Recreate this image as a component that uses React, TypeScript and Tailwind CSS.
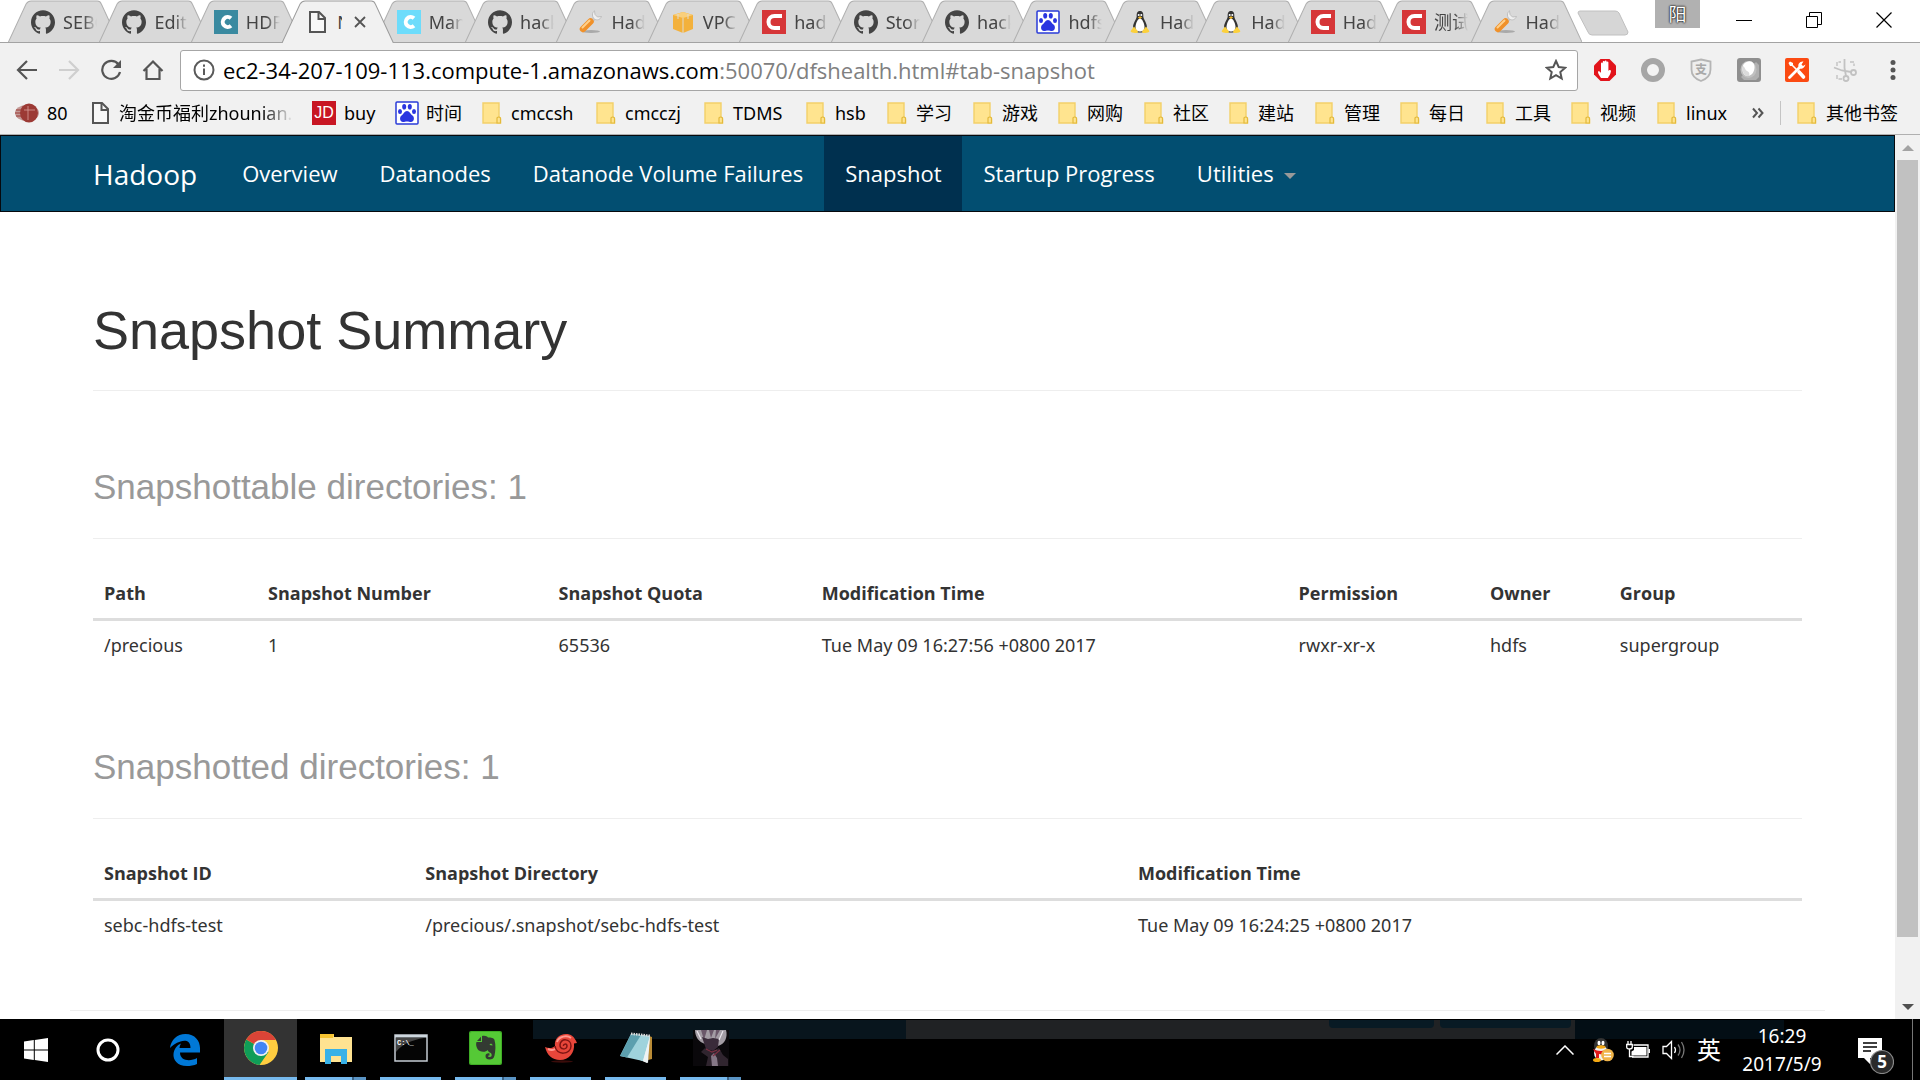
import React from "react";
import { SiGithub } from "react-icons/si";

type Kind = "github" | "cteal" | "page" | "ccyan" | "tool" | "box" | "cred" | "baidu" | "tux";

const tabs: { kind: Kind; title: string }[] = [
  { kind: "github", title: "SEBC" },
  { kind: "github", title: "Edit" },
  { kind: "cteal", title: "HDFS" },
  { kind: "page", title: "Namenode" },
  { kind: "ccyan", title: "Man" },
  { kind: "github", title: "hack" },
  { kind: "tool", title: "Had" },
  { kind: "box", title: "VPC" },
  { kind: "cred", title: "had" },
  { kind: "github", title: "Stor" },
  { kind: "github", title: "hack" },
  { kind: "baidu", title: "hdfs" },
  { kind: "tux", title: "Had" },
  { kind: "tux", title: "Had" },
  { kind: "cred", title: "Had" },
  { kind: "cred", title: "测试" },
  { kind: "tool", title: "Had" },
];

function PageIcon() {
  return (
    <svg viewBox="0 0 24 24" className="h-6 w-6 shrink-0" fill="#f8f8f8" stroke="#555" strokeWidth="2">
      <path d="M5 2h9l6 6v14H5z" />
      <path d="M13.500 2v7H20" fill="none" />
    </svg>
  );
}

function BaiduIcon() {
  return (
    <svg viewBox="0 0 24 24" className="h-6 w-6 shrink-0">
      <rect x="1" y="1" width="22" height="22" rx="1" fill="#fff" stroke="#2a3bd8" strokeWidth="1.500" />
      <g fill="#2a35e0">
        <ellipse cx="5" cy="10.500" rx="2" ry="2.600" />
        <ellipse cx="9.200" cy="5.800" rx="2" ry="2.800" />
        <ellipse cx="14.800" cy="5.800" rx="2" ry="2.800" />
        <ellipse cx="19" cy="10.500" rx="2" ry="2.600" />
        <path d="M12 10c2.500 0 3.500 3 5.500 4.500 2.500 2 1.500 6.500-1.500 6.500-1.500 0-2.500-.5-4-.5s-2.500.5-4 .5c-3 0-4-4.500-1.500-6.500C8.500 13 9.500 10 12 10z" />
      </g>
    </svg>
  );
}

function CIcon({ bg }: { bg: string }) {
  return (
    <svg viewBox="0 0 24 24" className="h-6 w-6 shrink-0">
      <rect width="24" height="24" fill={bg} />
      <path d="M20 6h-7.500a6 6 0 0 0 0 12H18" fill="none" stroke="#fff" strokeWidth="4" />
    </svg>
  );
}

function RoundC({ bg }: { bg: string }) {
  return (
    <svg viewBox="0 0 24 24" className="h-6 w-6 shrink-0">
      <rect width="24" height="24" fill={bg} />
      <path d="M17 8.200a5 5 0 1 0 0 7.600" fill="none" stroke="#fff" strokeWidth="4" />
    </svg>
  );
}

function Favicon({ kind }: { kind: Kind }) {
  switch (kind) {
    case "github":
      return <SiGithub className="h-6 w-6 shrink-0 text-[#444]" />;
    case "cteal":
      return <RoundC bg="#3a8aa0" />;
    case "ccyan":
      return <RoundC bg="#6ddcfb" />;
    case "cred":
      return <CIcon bg="#d63638" />;
    case "page":
      return <PageIcon />;
    case "baidu":
      return <BaiduIcon />;
    case "tool":
      return (
        <svg viewBox="0 0 24 24" className="h-6 w-6 shrink-0">
          <ellipse cx="12" cy="21.500" rx="9" ry="1.500" fill="#888" opacity=".6" />
          <path d="M10 14l7-7" stroke="#c8c8c8" strokeWidth="3.500" />
          <path d="M15.500.8c-3 2-2.500 6.500 0 8.200s5.500 1 7-2.500l-4 .5-2.500-2.500z" fill="#efefef" stroke="#b5b5b5" strokeWidth=".8" />
          <path d="M4 19l7.500-7.500" stroke="#f0912a" strokeWidth="6.500" strokeLinecap="round" />
          <path d="M3.500 17.500l7-7" stroke="#ffd08a" strokeWidth="2" strokeLinecap="round" />
        </svg>
      );
    case "box":
      return (
        <svg viewBox="0 0 24 24" className="h-6 w-6 shrink-0">
          <path d="M2 5l10-3 10 3v14l-10 4-10-4z" fill="#f3b13c" />
          <path d="M2 5l10 3 10-3-10-3z" fill="#f9cf7c" />
          <path d="M12 8v15M7 4v5M17 4v5" stroke="#dfdbd2" strokeWidth="1" />
        </svg>
      );
    case "tux":
      return (
        <svg viewBox="0 0 24 24" className="h-6 w-6 shrink-0">
          <path d="M12 1c-3 0-3.500 2.500-3.300 5.500C8.500 9 5 13 5 17.500c0 3 3 5 7 5s7-2 7-5c0-4.500-3.500-8.500-3.700-11C15.500 3.500 15 1 12 1z" fill="#333" />
          <path d="M12 8.500c-2 0-4.500 5-4.500 8.500s2 4.500 4.500 4.500 4.500-1 4.500-4.500-2.500-8.500-4.500-8.500z" fill="#fff" />
          <circle cx="10.700" cy="5" r="1" fill="#fff" />
          <circle cx="13.300" cy="5" r="1" fill="#fff" />
          <path d="M9.800 7.500l2.200-1.200 2.200 1.200-2.200 1.500z" fill="#f5b921" />
          <path d="M6 16.500l4 5c0 2-2.500 1.500-4.500 1.200S2 22 3 20.500zM18 16.500l-4 5c0 2 2.500 1.500 4.500 1.200S22 22 21 20.500z" fill="#fcd13c" />
        </svg>
      );
  }
}

function Tab({ kind, title, active }: { kind: Kind; title: string; active: boolean }) {
  return (
    <li className={active ? "relative z-10 h-[43px] min-w-0 flex-1" : "relative h-[43px] min-w-0 flex-1"}>
      <svg viewBox="0 0 111 43" preserveAspectRatio="none" className="absolute inset-y-0 left-0 h-full w-[calc(100%+20px)]">
        <path
          d="M0 43L18 4Q20 1 23 1H89Q92 1 93 4L111 43"
          fill={active ? "#f1f1f1" : "#d9d9d9"}
          stroke={active ? "#9c9c9c" : "#b0b0b0"}
        />
        {!active && <path d="M0 42.500H111" stroke="#a3a3a3" />}
      </svg>
      <button className="relative flex h-full w-full items-center gap-2 overflow-hidden pl-[23px] text-left text-lg text-[#444]">
        <Favicon kind={kind} />
        {active ? (
          <>
            <span className="w-[5px] overflow-hidden text-clip">{title}</span>
            <svg viewBox="0 0 12 12" className="ml-1 h-3 w-3 shrink-0" stroke="#555" strokeWidth="1.800">
              <path d="M1 1l10 10M11 1L1 11" />
            </svg>
          </>
        ) : (
          <span className="w-[34px] overflow-hidden whitespace-nowrap [mask-image:linear-gradient(to_right,#000_60%,transparent)]">
            {title}
          </span>
        )}
      </button>
    </li>
  );
}

function TabStrip() {
  return (
    <div className="flex h-[43px] items-start bg-white shadow-[inset_0_-1px_0_#a3a3a3]">
      <ul className="ml-2 flex w-[1554px] min-w-0">
        {tabs.map((t, i) => (
          <Tab key={i} kind={t.kind} title={t.title} active={i === 3} />
        ))}
      </ul>
      <button aria-label="New tab" className="ml-[15px] mt-2.5">
        <svg viewBox="0 0 52 26" className="h-[26px] w-[52px]">
          <path d="M3 1H38Q41 1 42 3L51 22Q51 25 48 25H15Q12 25 11 22L1 3Q1 1 3 1z" fill="#d6d6d6" stroke="#c0c0c0" />
        </svg>
      </button>
      <div className="ml-auto flex items-start">
        <button className="mr-9 h-7 w-[45px] bg-[#b1b1b1] text-lg leading-7 text-white [text-shadow:0_0_2px_#000,0_0_2px_#000]">阳</button>
        <div className="flex h-10 items-center gap-[54px] pr-7">
          <button aria-label="Minimize">
            <svg viewBox="0 0 16 16" className="h-4 w-4" stroke="#000"><path d="M0 8.500h16" /></svg>
          </button>
          <button aria-label="Restore">
            <svg viewBox="0 0 16 16" className="h-4 w-4" fill="none" stroke="#000">
              <path d="M.5 4.500h11v11H.5zM3.500 4.500v-4h12v12h-4" />
            </svg>
          </button>
          <button aria-label="Close">
            <svg viewBox="0 0 16 16" className="h-4 w-4" stroke="#000" strokeWidth="1.200"><path d="M.5.5l15 15M15.500.5l-15 15" /></svg>
          </button>
        </div>
      </div>
    </div>
  );
}

function NavButton({ label, dim, children }: { label: string; dim?: boolean; children: React.ReactNode }) {
  return (
    <button aria-label={label} className={dim ? "text-[#cfcfcf]" : "text-[#555]"}>
      <svg viewBox="0 0 22 22" className="h-[22px] w-[22px]" fill="none" stroke="currentColor" strokeWidth="2.200">
        {children}
      </svg>
    </button>
  );
}

function Toolbar() {
  return (
    <div className="flex h-[54px] items-center bg-[#f1f1f1] pl-4">
      <div className="flex w-[164px] items-center gap-5">
        <NavButton label="Back"><path d="M21 11H2M11 2l-9 9 9 9" /></NavButton>
        <NavButton label="Forward" dim><path d="M1 11h19M11 2l9 9-9 9" /></NavButton>
        <NavButton label="Reload">
          <path d="M18.500 5.500A9 9 0 1 0 20 13" />
          <path d="M21 1v8h-8z" fill="currentColor" stroke="none" />
        </NavButton>
        <NavButton label="Home"><path d="M1.500 12L11 2.500l9.500 9.500M4.500 10v10h13V10" /></NavButton>
      </div>
      <div className="flex h-[41px] min-w-0 flex-1 items-center rounded-[3px] border border-[#a6a6a6] bg-white pl-3 pr-2.5">
        <svg viewBox="0 0 22 22" className="h-[22px] w-[22px] shrink-0" fill="none" stroke="#5a5a5a" strokeWidth="2">
          <circle cx="11" cy="11" r="9.500" />
          <path d="M11 9.500v6.500M11 5.500v2.200" />
        </svg>
        <div role="textbox" aria-label="Address" className="ml-2 flex-1 whitespace-nowrap font-['Open_Sans',sans-serif] text-[22px] leading-8 text-black">
          ec2-34-207-109-113.compute-1.amazonaws.com<span className="text-[#808080]">:50070/dfshealth.html#tab-snapshot</span>
        </div>
        <button aria-label="Bookmark this page">
          <svg viewBox="0 0 22 22" className="h-[22px] w-[22px]" fill="none" stroke="#555" strokeWidth="2">
            <path d="M11 2l2.700 6 6.500.7-4.900 4.400 1.400 6.400L11 16.200l-5.700 3.300 1.400-6.400L1.800 8.700 8.300 8z" />
          </svg>
        </button>
      </div>
      <Extensions />
    </div>
  );
}

function Extensions() {
  return (
    <div className="flex items-center gap-6 pl-[15px] pr-[15px]">
      <button aria-label="Ad blocker">
        <svg viewBox="0 0 24 24" className="h-6 w-6">
          <path d="M7.500 1h9L23 7.500v9L16.500 23h-9L1 16.500v-9z" fill="#e2141b" />
          <path d="M8 20c-1-2-3.500-4.500-3-6.500 1.500-1 2.500.5 3 1.500V5.500c0-1.200 1.800-1.200 1.800 0V4c0-1.200 1.900-1.200 1.900 0v-.5c0-1.200 1.900-1.200 1.900 0v1c0-1.200 1.800-1.200 1.800 0V13c.5-1.500 2.800-1.500 2.500.5-.5 3-2 4.500-3 6.500z" fill="#fff" />
        </svg>
      </button>
      <button aria-label="Recorder">
        <svg viewBox="0 0 24 24" className="h-6 w-6"><circle cx="12" cy="12" r="9" fill="#f3f3f3" stroke="#a6a6a6" strokeWidth="6" /></svg>
      </button>
      <button aria-label="Payment guard">
        <svg viewBox="0 0 24 24" className="h-6 w-6">
          <path d="M12 1.500l9.500 2v8c0 6-4 9.500-9.500 11.500-5.500-2-9.500-5.500-9.500-11.500v-8z" fill="#eee" stroke="#b5b5b5" strokeWidth="1.800" />
          <text x="12" y="16" fontSize="12" fontWeight="bold" textAnchor="middle" fill="#a8a8a8">支</text>
        </svg>
      </button>
      <button aria-label="Proxy">
        <svg viewBox="0 0 24 24" className="h-6 w-6">
          <rect width="24" height="24" rx="3" fill="#8f8f8f" />
          <path d="M4 19L19 4l3 3v12l-3 3H7z" fill="#b0b0b0" />
          <ellipse cx="11.500" cy="11.500" rx="8" ry="8.500" fill="#c0c0c0" />
          <path d="M9.500 4c5-2.500 8.500 1 8 6s-3.500 8-7.500 8c-3-.5-5-4-4.500-8s2-5 4-6z" fill="#fff" />
          <path d="M6 8c2 1 2 4 4 5s3 2 2 5c-4 1-8-4-6-10z" fill="#dadada" />
        </svg>
      </button>
      <button aria-label="Tools">
        <svg viewBox="0 0 24 24" className="h-6 w-6">
          <rect width="24" height="24" rx="2" fill="#fb4a12" />
          <path d="M4.500 19.500L15 9" stroke="#fff" strokeWidth="2.800" strokeLinecap="round" />
          <path d="M6 6l6 6" stroke="#fff" strokeWidth="1.600" />
          <path d="M14 14l4.500 5" stroke="#fff" strokeWidth="3.600" strokeLinecap="round" />
          <path d="M18.500 3.500c-4-.5-6 3-4.800 5.500s5 2.500 6.800-2.500l-2.500 1.500-1.500-1.500zM3.500 5l1.500-1.500 3 1.500v2l-1 1H5z" fill="#fff" />
        </svg>
      </button>
      <button aria-label="Clip">
        <svg viewBox="0 0 24 24" className="h-6 w-6" fill="none" stroke="#c2c2c2" strokeWidth="1.800">
          <path d="M4 8V4h4M17 4h4v4M4 17v4h5" strokeDasharray="4 1.500" strokeWidth="1.400" />
          <path d="M11.500 1v9l1.500 8M1 9.500l8 3 9 1.500" />
          <circle cx="13" cy="20.500" r="2.500" />
          <circle cx="20.500" cy="14.500" r="2.500" />
        </svg>
      </button>
      <button aria-label="Menu">
        <svg viewBox="0 0 24 24" className="h-6 w-6" fill="#555"><circle cx="12" cy="4.500" r="2.500" /><circle cx="12" cy="12" r="2.500" /><circle cx="12" cy="19.500" r="2.500" /></svg>
      </button>
    </div>
  );
}

function Folder() {
  return (
    <svg viewBox="0 0 20 24" className="h-6 w-5 shrink-0">
      <path d="M1 2h16v14l1.500 2v4H1z" fill="#ffe48f" stroke="#f3d069" strokeWidth="1.400" />
      <path d="M15 22v-5q1.700-2 3.500 0v5z" fill="#ffe48f" stroke="#e3ba3c" strokeWidth="1.200" />
    </svg>
  );
}

const folders: { name: string; width: string }[] = [
  { name: "cmccsh", width: "w-[114px]" },
  { name: "cmcczj", width: "w-[108px]" },
  { name: "TDMS", width: "w-[102px]" },
  { name: "hsb", width: "w-[81px]" },
  { name: "学习", width: "w-[86px]" },
  { name: "游戏", width: "w-[85px]" },
  { name: "网购", width: "w-[86px]" },
  { name: "社区", width: "w-[85px]" },
  { name: "建站", width: "w-[86px]" },
  { name: "管理", width: "w-[85px]" },
  { name: "每日", width: "w-[86px]" },
  { name: "工具", width: "w-[85px]" },
  { name: "视频", width: "w-[86px]" },
  { name: "linux", width: "w-[95px]" },
];

function BookmarkBar() {
  return (
    <div className="flex h-[38px] items-center whitespace-nowrap border-b border-[#b0b0b0] bg-[#f1f1f1] pb-[5px] pl-[15px] text-lg text-black">
      <a href="#80" className="flex w-[73px] shrink-0 items-center gap-2">
        <svg viewBox="0 0 24 20" className="h-5 w-6 shrink-0">
          <ellipse cx="12" cy="10" rx="12" ry="8" fill="#c39a97" />
          <ellipse cx="14" cy="10" rx="9" ry="9.500" fill="#9c3a35" />
          <path d="M1 7h12M0 10h12M1 13h12" stroke="#9c3a35" />
          <path d="M13 3v14M9 7h11" stroke="#d9a09b" strokeWidth=".8" />
        </svg>
        80
      </a>
      <a href="#taobao" className="flex w-[224px] shrink-0 items-center gap-[7px]">
        <PageIcon />
        <span className="w-[174px] overflow-hidden [mask-image:linear-gradient(to_right,#000_82%,transparent)]">淘金币福利zhounian.</span>
      </a>
      <a href="#buy" className="flex w-[83px] shrink-0 items-center gap-2">
        <span className="grid h-6 w-6 place-items-center bg-[#c81623] font-['Liberation_Sans',sans-serif] text-base leading-6 text-white">JD</span>
        buy
      </a>
      <a href="#time" className="flex w-[87px] shrink-0 items-center gap-[7px]"><BaiduIcon />时间</a>
      {folders.map((f) => (
        <a key={f.name} href={"#" + f.name} className={"flex shrink-0 items-center gap-[9px] " + f.width}>
          <Folder />
          {f.name}
        </a>
      ))}
      <button aria-label="More bookmarks">
        <svg viewBox="0 0 12 12" className="h-3 w-3" fill="none" stroke="#555" strokeWidth="2"><path d="M1 1.500L5 6l-4 4.500M6.500 1.500l4 4.500-4 4.500" /></svg>
      </button>
      <span className="mx-4 h-6 w-px shrink-0 bg-[#c4c4c4]" />
      <a href="#other" className="flex items-center gap-[9px]"><Folder />其他书签</a>
    </div>
  );
}

const navItems = ["Overview", "Datanodes", "Datanode Volume Failures", "Snapshot", "Startup Progress"];

function Navbar() {
  return (
    <nav className="flex h-[77px] items-stretch whitespace-nowrap border border-[#06090d] bg-[#024e71] pl-[92px] font-['Open_Sans',sans-serif] text-[22px] text-white">
      <a href="#hadoop" className="flex items-center pr-6 text-[28px]">Hadoop</a>
      {navItems.map((n) => (
        <a
          key={n}
          href={"#" + n}
          className={n === "Snapshot" ? "flex items-center bg-[#00304f] px-[21px]" : "flex items-center px-[21px]"}
        >
          {n}
        </a>
      ))}
      <button className="flex items-center gap-2.5 px-[21px]">
        Utilities
        <svg viewBox="0 0 12 6" className="mt-1 h-1.5 w-3" fill="#999"><path d="M0 0h12L6 6z" /></svg>
      </button>
    </nav>
  );
}

function SubHeading({ children }: { children: React.ReactNode }) {
  return (
    <h2 className="border-b border-[#eee] pb-[30px] font-['Liberation_Sans',Arial,sans-serif] text-[35px] leading-[42px] text-[#999]">
      {children}
    </h2>
  );
}

function DataTable({ label, cols, row }: { label: string; cols: { name: string; width: string }[]; row: string[] }) {
  return (
    <table aria-label={label} className="mt-[30px] w-full table-fixed text-left text-lg leading-[25px] text-[#333]">
      <thead className="font-['Open_Sans',sans-serif]">
        <tr className="border-b-[3px] border-[#ddd]">
          {cols.map((c) => (
            <th key={c.name} className={"px-[11px] py-3 font-bold " + c.width}>{c.name}</th>
          ))}
        </tr>
      </thead>
      <tbody>
        <tr>
          {row.map((v, i) => (
            <td key={i} className="px-[11px] py-3">{v}</td>
          ))}
        </tr>
      </tbody>
    </table>
  );
}

function Page() {
  return (
    <main className="min-w-0 flex-1 overflow-hidden bg-white">
      <Navbar />
      <div className="px-[93px]">
        <h1 className="mt-[89px] border-b border-[#eee] pb-[30px] font-['Liberation_Sans',Arial,sans-serif] text-[54px] leading-[59px] text-[#333]">
          Snapshot Summary
        </h1>
        <section className="mt-[75px]">
          <SubHeading>Snapshottable directories: 1</SubHeading>
          <DataTable
            label="Snapshottable directories"
            cols={[
              { name: "Path", width: "w-[9.6%]" },
              { name: "Snapshot Number", width: "w-[17%]" },
              { name: "Snapshot Quota", width: "w-[15.4%]" },
              { name: "Modification Time", width: "w-[27.9%]" },
              { name: "Permission", width: "w-[11.2%]" },
              { name: "Owner", width: "w-[7.6%]" },
              { name: "Group", width: "" },
            ]}
            row={["/precious", "1", "65536", "Tue May 09 16:27:56 +0800 2017", "rwxr-xr-x", "hdfs", "supergroup"]}
          />
        </section>
        <section className="mt-[76px]">
          <SubHeading>Snapshotted directories: 1</SubHeading>
          <DataTable
            label="Snapshotted directories"
            cols={[
              { name: "Snapshot ID", width: "w-[18.8%]" },
              { name: "Snapshot Directory", width: "w-[41.7%]" },
              { name: "Modification Time", width: "" },
            ]}
            row={["sebc-hdfs-test", "/precious/.snapshot/sebc-hdfs-test", "Tue May 09 16:24:25 +0800 2017"]}
          />
        </section>
      </div>
      <hr className="mx-[70px] mt-[60px] border-[#eee]" />
    </main>
  );
}

function Scrollbar() {
  return (
    <div className="flex w-[25px] shrink-0 flex-col items-center bg-[#f1f1f1]">
      <button aria-label="Scroll up" className="grid h-[25px] w-full place-items-center">
        <svg viewBox="0 0 12 6" className="h-1.5 w-3" fill="#a3a3a3"><path d="M0 6h12L6 0z" /></svg>
      </button>
      <div className="w-[21px] grow-[777] bg-[#c1c1c1]" />
      <div className="grow-[57]" />
      <button aria-label="Scroll down" className="grid h-[25px] w-full place-items-center">
        <svg viewBox="0 0 12 6" className="h-1.5 w-3" fill="#505050"><path d="M0 0h12L6 6z" /></svg>
      </button>
    </div>
  );
}

function TaskButton({ label, stacked, children }: { label: string; stacked?: boolean; children: React.ReactNode }) {
  return (
    <button aria-label={label} className="flex w-[61px] flex-col items-center justify-between">
      <span className="grid flex-1 place-items-center">{children}</span>
      <span className="flex h-[3px] w-full bg-[#76b9ed]">
        {stacked && <span className="ml-auto w-3.5 border-l-2 border-[#3c6385] bg-[#5a94c4]" />}
      </span>
    </button>
  );
}

function Taskbar() {
  return (
    <footer className="relative flex h-[61px] shrink-0 items-stretch bg-black text-white">
      <div className="absolute left-[533px] right-[136px] top-px flex h-[19px]">
        <span className="w-[373px] bg-[#08151d]" />
        <span className="flex w-[669px] bg-[#202224] pl-[423px]">
          <span className="h-2 w-[105px] rounded-b bg-[#081a24]" />
          <span className="ml-1.5 h-2 w-[131px] rounded-b bg-[#081a24]" />
        </span>
        <span className="flex-1 bg-[#030e15]" />
      </div>
      <div className="relative flex">
        <button aria-label="Start" className="grid w-[72px] place-items-center">
          <svg viewBox="0 0 24 24" className="h-6 w-6" fill="#fff"><path d="M0 3.500l9.800-1.400v9.400H0zM10.800 2L24 0v11.500H10.800zM0 12.500h9.800v9.400L0 20.500zM10.800 12.500H24V24l-13.200-2z" /></svg>
        </button>
        <button aria-label="Cortana" className="grid w-[72px] place-items-center">
          <svg viewBox="0 0 24 24" className="h-6 w-6" fill="none" stroke="#fff" strokeWidth="3"><circle cx="12" cy="12" r="10" /></svg>
        </button>
        <button aria-label="Edge" className="grid w-20 place-items-center pl-0.5">
          <svg viewBox="0 0 32 32" className="h-8 w-8" fill="#0078d7">
            <path d="M1 14C2 6 8 0 16.500 0 26 0 31 7 31 14v4.500H11c0 9 11 9 17 5.500v6c-3 1.500-7 2-10 2C8 32 4 25.500 4.500 20 5 15 8 11 12 9.500c-1 1.500-1.300 3-1.500 4.500h11c0-8-6-8-10-6.500C6.500 9 3 11.500 1 14z" />
          </svg>
        </button>
        <button aria-label="Chrome" className="flex w-[73px] flex-col bg-[#333]">
          <span className="grid w-full flex-1 place-items-center">
            <svg viewBox="0 0 34 34" className="h-[34px] w-[34px]">
              <circle cx="17" cy="17" r="17" fill="#ffcd40" />
              <path d="M17 17L2.300 8.500A17 17 0 0 0 15.500 33.900l9-13z" fill="#0f9d58" />
              <path d="M17 17L2.300 8.500A17 17 0 0 1 32 9H17z" fill="#db4437" />
              <circle cx="17" cy="17" r="8" fill="#f1f1f1" />
              <circle cx="17" cy="17" r="6.300" fill="#4285f4" />
            </svg>
          </span>
          <span className="h-[3px] w-full bg-[#76b9ed]" />
        </button>
        <div className="ml-2 flex gap-3.5">
          <TaskButton label="File Explorer" stacked>
            <svg viewBox="0 0 32 32" className="h-8 w-8">
              <path d="M0 2h14v3h18v25H0z" fill="#ffe391" />
              <path d="M0 2h14l-1 4H0z" fill="#f7c431" />
              <path d="M5 32V17h22v15h-6v-8H11v8z" fill="#38b1e7" />
            </svg>
          </TaskButton>
          <TaskButton label="Command Prompt">
            <svg viewBox="0 0 34 28" className="h-7 w-[34px]">
              <rect x="1" y="1" width="32" height="26" fill="#050505" stroke="#c5ccd3" strokeWidth="1.500" />
              <path d="M1 1h32v2.500H1z" fill="#cdd6de" />
              <path d="M2 4h28C18 6 8 10 2 18z" fill="#444" />
              <text x="3" y="11" fontSize="7" fontFamily="Liberation Mono" fontWeight="bold" fill="#fff">C:\_</text>
            </svg>
          </TaskButton>
          <TaskButton label="Evernote" stacked>
            <svg viewBox="0 0 33 34" className="h-[34px] w-[33px]">
              <rect width="33" height="34" rx="2" fill="#3fae25" />
              <rect x="1" y="1" width="31" height="32" rx="2" fill="#55c936" />
              <path d="M13 5c3-.8 5 .2 6 1.500 3 0 6 .3 6.500 2.500 1.500 5 1 11 0 15.500-.7 3-2.500 4-5 4-2.800 0-4-1.500-4-3.500s1.800-3 4-2.500v2c-2-.5-2 1.500 0 1.500s2.500-1 2-3c-.5-1.500-3-1.500-4-4-1.500 2.500-8 2.500-10-1C7 15.500 6.800 12.500 7.500 11H13z" fill="#333a32" />
              <path d="M12 5.800V10H8z" fill="#333a32" />
              <path d="M20.500 14c.5-1.800 3-1.500 3 .5z" fill="#55c936" />
            </svg>
          </TaskButton>
          <TaskButton label="Xshell">
            <svg viewBox="0 0 34 30" className="h-[30px] w-[34px]">
              <ellipse cx="18" cy="28.500" rx="11" ry="1.200" fill="#3a0c0a" />
              <path d="M1 14c4 2 8 1 10-1C10 6 15 1 22 1c5 0 8 2 11 9l-3 .5c1 9-5 16.500-14 16.500C8 27 3 22 1 14z" fill="#e8463a" />
              <path d="M11 13c1 10 16 9 16 0 0-8-11-8-11-1 0 5 7 5 7 1 0-3-4-2-3.500 0" fill="none" stroke="#7d1412" strokeWidth="1.500" />
              <path d="M13 9c2-6 10-7 14-4M4 16c4 2 5 1 7 0" fill="none" stroke="#ff9a90" strokeWidth="2" />
            </svg>
          </TaskButton>
          <TaskButton label="Notepad">
            <svg viewBox="0 0 34 32" className="h-8 w-[34px]">
              <path d="M30 4l3 1v22l-4 1z" fill="#b98b35" />
              <path d="M12 2l19 2-3 27-7-3z" fill="#e6eef0" />
              <path d="M12 2l19 2-7 25L1 24z" fill="#9fd3dc" />
              <path d="M12 2L1 24l7 1.500L22 3z" fill="#5c9fae" />
              <path d="M31 4l-7 25 5 2z" fill="#eef3f4" />
              <path d="M12 1.800l19 2" stroke="#ddd" strokeWidth="2.500" strokeDasharray="1.500 1" />
            </svg>
          </TaskButton>
          <TaskButton label="Game" stacked>
            <svg viewBox="0 0 36 36" className="h-9 w-9">
              <rect width="36" height="36" fill="#0a080b" />
              <path d="M2 0h31c2 7-1 14-8 16l-6-3-7 1C6 12 2 7 2 0z" fill="#a39ca4" />
              <path d="M8 0l3 10 3-10zM16 0l2 8 3-8zM23 0l-1 9 5-9z" fill="#6b586a" />
              <path d="M9 7l6 2 5-1 6 1-1 8-5 4-7-2z" fill="#3a2b3a" />
              <path d="M12 18l6 4 8-4 4 7 5 4v7H13l2-9-7-5z" fill="#30252f" />
              <path d="M18 26l3-3 3 5 1 8h-6z" fill="#857786" />
              <path d="M27 20l-7 6M13 19l6 3 5-2" stroke="#7d3043" strokeWidth="1.200" fill="none" />
              <path d="M4 1l4 8M30 1l-4 9" stroke="#ece6ed" strokeWidth="1.200" />
            </svg>
          </TaskButton>
        </div>
      </div>
      <div className="relative ml-auto flex items-center">
        <button aria-label="Show hidden icons" className="mr-[18px]">
          <svg viewBox="0 0 18 10" className="h-2.5 w-[18px]" fill="none" stroke="#fff" strokeWidth="1.500"><path d="M.5 9.500L9 1l8.500 8.500" /></svg>
        </button>
        <svg viewBox="0 0 22 24" className="mr-3 h-6 w-[22px]">
          <ellipse cx="9" cy="8" rx="7" ry="8" fill="#333" />
          <ellipse cx="9" cy="15" rx="7" ry="7.500" fill="#f3f3f3" />
          <path d="M1 11q8 4 16 0v3q-5 3-10 2v4H4v-4z" fill="#e21919" />
          <ellipse cx="7" cy="5" rx="1.500" ry="2.300" fill="#fff" /><ellipse cx="11" cy="5" rx="1.500" ry="2.300" fill="#fff" />
          <ellipse cx="9" cy="9" rx="4.500" ry="1.700" fill="#f5a913" />
          <ellipse cx="5" cy="22" rx="4" ry="2" fill="#f5a913" />
          <circle cx="15.500" cy="17" r="6.300" fill="#f0b44a" />
          <path d="M12 15.500h7M12 18.500h7" stroke="#fff" strokeWidth="1.500" />
        </svg>
        <svg viewBox="0 0 24 18" className="mr-3 h-[18px] w-6" fill="none" stroke="#fff" strokeWidth="1.300">
          <path d="M2 0v3M5 0v3M.7 3.500h5.600v2.500q0 2-2.800 2t-2.800-2zM3.500 8v7.500h4" />
          <path d="M7.500 4h14.500v12H6" />
          <path d="M8 6h12.500v8.500H5.500v-4L8 9z" fill="#fff" stroke="none" />
          <path d="M23.200 8v4" strokeWidth="1.500" />
        </svg>
        <svg viewBox="0 0 24 20" className="mr-[11px] h-5 w-6" fill="none" stroke="#fff" strokeWidth="1.300">
          <path d="M1 6.500h3.500L9.500 1.500v17l-5-5H1z" />
          <path d="M12.500 7q2 3 0 6" />
          <path d="M16 4.500q4 5.500 0 11M19.500 2q5 8 0 16" stroke="#777" />
        </svg>
        <span className="mr-[18px] text-2xl leading-8">英</span>
        <div className="w-[86px] text-center text-[19px] leading-7">
          <div>16:29</div>
          <div>2017/5/9</div>
        </div>
        <button aria-label="Notifications" className="relative ml-[33px] mr-[18px] mt-3 h-9 w-[36px]">
          <svg viewBox="0 0 36 36" className="h-9 w-9">
            <path d="M0 0h24v20H12v6l-6-6H0z" fill="#fff" />
            <path d="M5 5h14M5 9h14M5 13h8" stroke="#000" strokeWidth="1.300" />
            <circle cx="24" cy="24" r="11.500" fill="#2a2a2a" stroke="#8a8a8a" strokeWidth="1.200" />
            <text x="24" y="30" fontSize="17" fontWeight="bold" textAnchor="middle" fill="#fff">5</text>
          </svg>
        </button>
        <span className="mr-[7px] h-full w-px bg-[#777]" />
      </div>
    </footer>
  );
}

export default function App() {
  return (
    <div className="flex h-screen flex-col overflow-hidden bg-white font-['Noto_Sans','Noto_Sans_CJK_SC',sans-serif]">
      <TabStrip />
      <Toolbar />
      <BookmarkBar />
      <div className="flex min-h-0 flex-1">
        <Page />
        <Scrollbar />
      </div>
      <Taskbar />
    </div>
  );
}
